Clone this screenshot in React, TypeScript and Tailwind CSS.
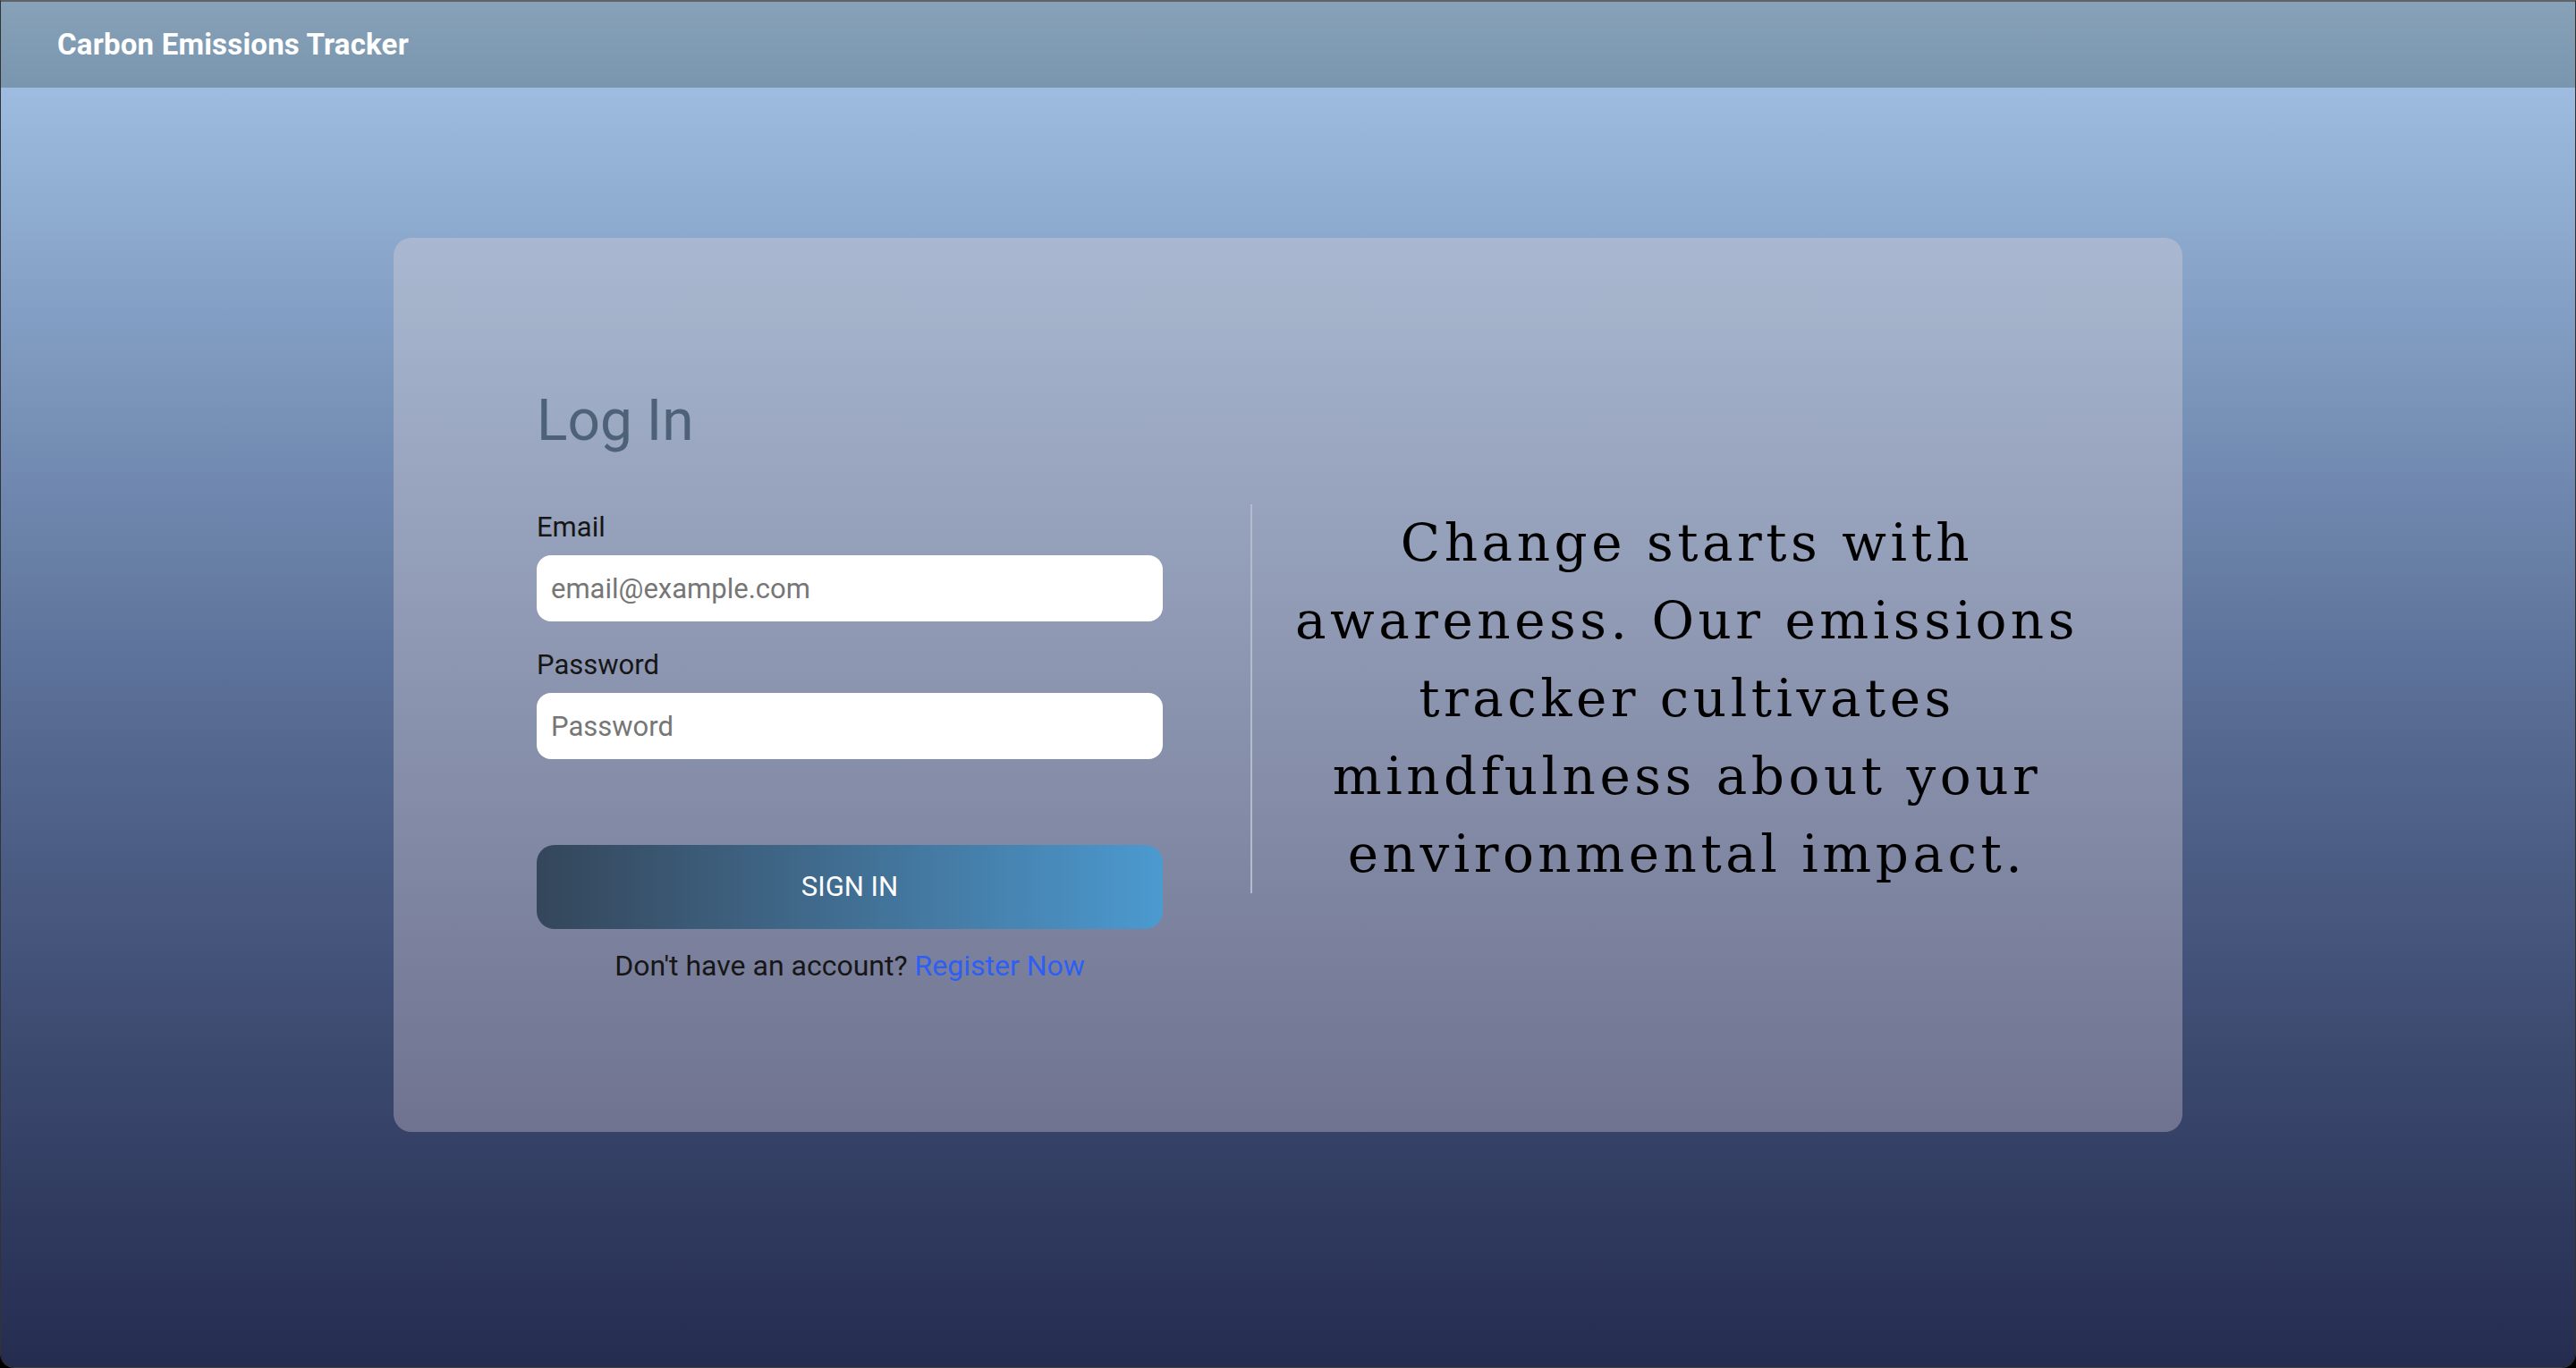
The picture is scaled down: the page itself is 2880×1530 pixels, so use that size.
import React from "react";

const sans = { fontFamily: "Roboto, 'Noto Sans', sans-serif" };

export default function App() {
  return (
    <div className="h-[1530px] w-[2880px] bg-black" style={sans}>
      <div className="flex h-full flex-col overflow-hidden rounded-b-[16px] border-x border-b border-t-2 border-x-white/20 border-b-white/25 border-t-[#5f6266]">
        <header className="flex h-[96px] shrink-0 items-center bg-gradient-to-b from-[#86a1b8] to-[#7a96ae] px-[63px]">
          <h1 className="text-[33px] font-bold tracking-[0.2px] text-white">Carbon Emissions Tracker</h1>
        </header>
        <main className="flex-1 bg-gradient-to-b from-[#9dbce0] via-[#566a92] to-[#252c50] pt-[168px]">
          <div className="mx-auto flex h-[1000px] w-[2000px] items-center rounded-[20px] bg-gradient-to-b from-[#a9b8d0] to-[#6f7390] pl-[160px] pr-[68px]">
            <div className="flex w-[700px] flex-col">
              <h2 className="text-[64px] leading-[76px] font-normal text-[#4e6277]">Log In</h2>
              <label className="mt-[62px] text-[31px] leading-[38px] text-[#161616]">Email</label>
              <input
                type="email"
                placeholder="email@example.com"
                className="mt-[12px] h-[74px] w-full rounded-[16px] bg-white px-[16px] text-[31px] text-[#222] outline-none placeholder:text-[#767676]"
              />
              <label className="mt-[30px] text-[31px] leading-[38px] text-[#161616]">Password</label>
              <input
                type="password"
                placeholder="Password"
                className="mt-[12px] h-[74px] w-full rounded-[16px] bg-white px-[16px] text-[31px] text-[#222] outline-none placeholder:text-[#767676]"
              />
              <button className="mt-[96px] h-[94px] w-full rounded-[20px] bg-gradient-to-r from-[#34465a] to-[#4b9ad0] text-[31px] text-white">
                SIGN IN
              </button>
              <p className="mt-[22px] text-center text-[32px] leading-[38px] text-[#161616]">
                Don't have an account? <a className="text-[#2d5ef5]">Register Now</a>
              </p>
            </div>
            <div className="ml-[98px] mt-[30px] flex-1 border-l-2 border-[#b3bbcf]">
              <p
                className="text-center text-[58px] leading-[87px] tracking-[4.5px] text-black"
                style={{ fontFamily: "'DejaVu Serif', 'Liberation Serif', serif" }}
              >
                Change starts with
                <br />
                awareness. Our emissions
                <br />
                tracker cultivates
                <br />
                mindfulness about your
                <br />
                environmental impact.
              </p>
            </div>
          </div>
        </main>
      </div>
    </div>
  );
}
